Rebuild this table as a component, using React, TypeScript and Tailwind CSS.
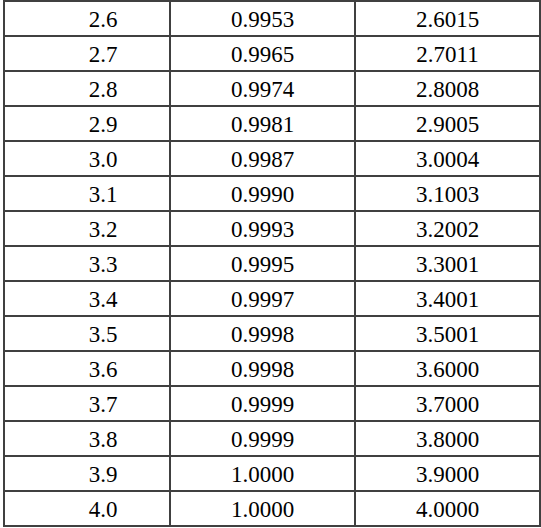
import React from "react";

const rows: [string, string, string][] = [
    ["2.6", "0.9953", "2.6015"],
    ["2.7", "0.9965", "2.7011"],
    ["2.8", "0.9974", "2.8008"],
    ["2.9", "0.9981", "2.9005"],
    ["3.0", "0.9987", "3.0004"],
    ["3.1", "0.9990", "3.1003"],
    ["3.2", "0.9993", "3.2002"],
    ["3.3", "0.9995", "3.3001"],
    ["3.4", "0.9997", "3.4001"],
    ["3.5", "0.9998", "3.5001"],
    ["3.6", "0.9998", "3.6000"],
    ["3.7", "0.9999", "3.7000"],
    ["3.8", "0.9999", "3.8000"],
    ["3.9", "1.0000", "3.9000"],
    ["4.0", "1.0000", "4.0000"],
];

const App = () => {
    return (
        <div className="bg-white w-[541px] h-[528px] pl-[3px] font-['Liberation_Serif','Times_New_Roman',serif]">
            <table className="table-fixed border-separate border-spacing-0 border-l-2 border-t-2 border-[#404040] text-[23px] text-black">
                <colgroup>
                    <col className="w-[166px]" />
                    <col className="w-[185px]" />
                    <col className="w-[185px]" />
                </colgroup>
                <tbody>
                    {rows.map((r) => (
                        <tr key={r[0]} className="h-[35px]">
                            <td className="border-r-2 border-b-2 border-[#404040] p-0 pl-[32px] pt-[2px] text-center leading-none">
                                {r[0]}
                            </td>
                            <td className="border-r-2 border-b-2 border-[#404040] p-0 pt-[2px] text-center leading-none">
                                {r[1]}
                            </td>
                            <td className="border-r-2 border-b-2 border-[#404040] p-0 pt-[2px] text-center leading-none">
                                {r[2]}
                            </td>
                        </tr>
                    ))}
                </tbody>
            </table>
        </div>
    );
};

export default App;
